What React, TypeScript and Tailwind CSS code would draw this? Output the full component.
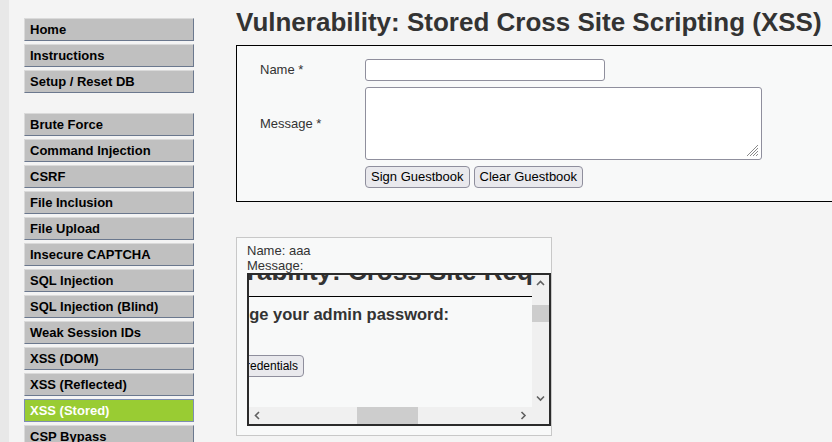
const menuGroups = [
  ["Home", "Instructions", "Setup / Reset DB"],
  [
    "Brute Force",
    "Command Injection",
    "CSRF",
    "File Inclusion",
    "File Upload",
    "Insecure CAPTCHA",
    "SQL Injection",
    "SQL Injection (Blind)",
    "Weak Session IDs",
    "XSS (DOM)",
    "XSS (Reflected)",
    "XSS (Stored)",
    "CSP Bypass",
  ],
];

const selected = "XSS (Stored)";

function MenuItem({ label }: { label: string }) {
  const active = label === selected;
  return (
    <li>
      <a
        href="#"
        className={
          active
            ? "mb-[3px] block border border-[#7d8db3] bg-[#99cc33] px-[5px] py-[3px] text-[13px] font-bold leading-[15px] text-white"
            : "mb-[3px] block border border-[#dadada] border-b-[#6b788e] border-r-[#6b788e] bg-[#c0c0c0] px-[5px] py-[3px] text-[13px] font-bold leading-[15px] text-black"
        }
      >
        {label}
      </a>
    </li>
  );
}

function Chevron({ dir }: { dir: "up" | "down" | "left" | "right" }) {
  const points = {
    up: "1,5 4.5,1.5 8,5",
    down: "1,1.5 4.5,5 8,1.5",
    left: "5,1 1.5,4.5 5,8",
    right: "1.5,1 5,4.5 1.5,8",
  }[dir];
  const size = dir === "up" || dir === "down" ? { w: 9, h: 7 } : { w: 7, h: 9 };
  return (
    <svg width={size.w} height={size.h} viewBox={`0 0 ${size.w} ${size.h}`}>
      <polyline points={points} fill="none" stroke="#606060" strokeWidth="1.6" />
    </svg>
  );
}

function FramedPage() {
  return (
    <div className="flex h-[153px] w-[304px] flex-col border-2 border-[#2b2b2b]">
      <div className="flex h-[132px]">
        <div className="w-[283px] overflow-hidden">
          <div className="flow-root h-[21px] bg-[#f4f4f4]">
            <div className="-ml-[72px] -mt-[19px] whitespace-nowrap text-[26px] font-bold leading-[30px] text-[#333]">
              Vulnerability: Cross Site Request Forgery (CSRF)
            </div>
          </div>
          <div className="flow-root h-[111px] border-t border-black bg-[#f8f9f9]">
            <div className="-ml-[41px] mt-[8px] whitespace-nowrap text-[16.5px] font-bold leading-[19px] text-[#333]">
              Change your admin password:
            </div>
            <button className="-ml-[43px] mt-[31px] h-[22px] whitespace-nowrap rounded-[4px] border border-[#8f8f9d] bg-[#e9e9ed] px-[5px] text-[12px] text-black">
              Test Credentials
            </button>
          </div>
        </div>
        <div className="flex w-[17px] flex-col bg-[#f0f0f0]">
          <div className="flex h-[17px] items-center justify-center">
            <Chevron dir="up" />
          </div>
          <div className="mt-[13px] h-[17px] bg-[#cdcdcd]" />
          <div className="flex-1" />
          <div className="flex h-[17px] items-center justify-center">
            <Chevron dir="down" />
          </div>
        </div>
      </div>
      <div className="flex h-[17px]">
        <div className="flex w-[283px] bg-[#f0f0f0]">
          <div className="flex w-[17px] items-center justify-center">
            <Chevron dir="left" />
          </div>
          <div className="ml-[91px] w-[61px] bg-[#cdcdcd]" />
          <div className="flex-1" />
          <div className="flex w-[17px] items-center justify-center">
            <Chevron dir="right" />
          </div>
        </div>
        <div className="w-[17px] bg-[#f0f0f0]" />
      </div>
    </div>
  );
}

export default function App() {
  return (
    <div
      className="flex h-[442px] w-[832px] overflow-hidden bg-[#f4f4f4]"
      style={{ fontFamily: '"Liberation Sans", Arial, sans-serif' }}
    >
      <div className="w-[9px] shrink-0 bg-[#e8e8e8]" />
      <nav className="ml-[15px] mt-[18px] w-[170px] shrink-0">
        {menuGroups.map((group, i) => (
          <ul key={i} className={i > 0 ? "mt-[20px]" : ""}>
            {group.map((label) => (
              <MenuItem key={label} label={label} />
            ))}
          </ul>
        ))}
      </nav>
      <main className="ml-[42px] shrink-0">
        <h1 className="mb-[8px] mt-[7px] whitespace-nowrap text-[26px] font-bold leading-[30px] text-[#333]">
          Vulnerability: Stored Cross Site Scripting (XSS)
        </h1>

        <div className="w-[640px] border border-black bg-[#f8f9f9] py-[13px] pl-[23px] text-[13px] text-[#333]">
          <div className="grid grid-cols-[105px_auto] items-center gap-y-[6px]">
            <label>Name *</label>
            <input
              type="text"
              className="h-[22px] w-[240px] rounded-[3px] border border-[#8f8f9d] bg-white px-1"
            />
            <label>Message *</label>
            <div className="relative h-[73px] w-[397px]">
              <textarea className="h-full w-full resize-none rounded-[3px] border border-[#8f8f9d] bg-white" />
              <svg
                className="absolute bottom-[3px] right-[3px]"
                width="14"
                height="14"
                viewBox="0 0 14 14"
              >
                <path
                  d="M13 2 L2 13 M13 5 L5 13 M13 8 L8 13 M13 11 L11 13"
                  stroke="#8a8a8a"
                  strokeWidth="1"
                />
              </svg>
            </div>
            <div />
            <div className="flex gap-[4px]">
              <button className="h-[22px] rounded-[4px] border border-[#8f8f9d] bg-[#e9e9ed] px-[5px] text-[13px] text-black">
                Sign Guestbook
              </button>
              <button className="h-[22px] rounded-[4px] border border-[#8f8f9d] bg-[#e9e9ed] px-[5px] text-[13px] text-black">
                Clear Guestbook
              </button>
            </div>
          </div>
        </div>

        <div className="mt-[35px] h-[199px] w-[316px] border border-[#c8c8c8] bg-[#f8f9f9] pl-[10px] pt-[5px] text-[13px] leading-[15px] text-[#333]">
          <div>Name: aaa</div>
          <div>Message:</div>
          <FramedPage />
        </div>
      </main>
    </div>
  );
}
